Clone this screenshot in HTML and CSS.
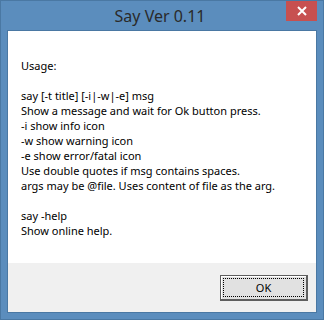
FILE: index.html
```html
<!DOCTYPE html>
<html lang="en">
<head>
    <meta charset="UTF-8">
    <title>Say Ver 0.11</title>
    <link rel="stylesheet" href="styles.css">
</head>
<body>
    <div class="window">
        <div class="titlebar">
            <div class="title">Say Ver 0.11</div>
            <div class="close">
                <svg width="10" height="10" viewBox="0 0 10 10">
                    <path d="M1 1 L9 9 M9 1 L1 9" stroke="#fff" stroke-width="2"/>
                </svg>
            </div>
        </div>
        <div class="client">
            <div class="message">
                <p>Usage:</p>
                <p>say [-t title] [-i|-w|-e] msg<br>
                Show a message and wait for Ok button press.<br>
                -i show info icon<br>
                -w show warning icon<br>
                -e show error/fatal icon<br>
                Use double quotes if msg contains spaces.<br>
                args may be @file. Uses content of file as the arg.</p>
                <p>say -help<br>
                Show online help.</p>
            </div>
            <div class="buttons">
                <button class="ok"><span>OK</span></button>
            </div>
        </div>
    </div>
</body>
</html>
```

FILE: styles.css
```css
/* Window frame */
body {
    margin: 0;
    font-family: "Noto Sans", "Open Sans", sans-serif;
    font-size: 11px;
    color: #000;
}

.window {
    width: 324px;
    height: 320px;
    box-sizing: border-box;
    background: #5b8dbd;
    border: 1px solid #4a78a3;
    display: flex;
    flex-direction: column;
}

.titlebar {
    position: relative;
    height: 29px;
    display: flex;
    justify-content: center;
    align-items: center;
}

.title {
    font-family: "Noto Sans", sans-serif;
    font-size: 16px;
    color: #2a2a2a;
    padding-top: 1px;
    padding-right: 4px;
}

.close {
    position: absolute;
    top: 0;
    right: 6px;
    width: 31px;
    height: 20px;
    background: #c75050;
    display: flex;
    justify-content: center;
    align-items: center;
}

/* Client area */
.client {
    flex: 1;
    margin: 0 6px 6px 6px;
    border: 1px solid #4a78a3;
    display: flex;
    flex-direction: column;
}

.message {
    height: 232px;
    box-sizing: border-box;
    background: #fff;
    padding: 27px 13px 0 13px;
    line-height: 15px;
}

.message p {
    margin: 0 0 15px 0;
}

.buttons {
    flex: 1;
    background: #f0f0f0;
    display: flex;
    justify-content: flex-end;
    align-items: flex-start;
    padding: 12px 8px 0 0;
}

.ok {
    width: 88px;
    height: 26px;
    padding: 2px;
    background: #e1e1e1;
    border: 1px solid #5e5e5e;
    border-right-width: 2px;
    border-bottom-width: 2px;
    box-shadow: inset 1px 1px 0 #fff;
    font-family: "Noto Sans", sans-serif;
    font-size: 11px;
    color: #000;
    display: flex;
}

.ok span {
    flex: 1;
    border: 1px dotted #000;
    display: flex;
    justify-content: center;
    align-items: center;
}
```
